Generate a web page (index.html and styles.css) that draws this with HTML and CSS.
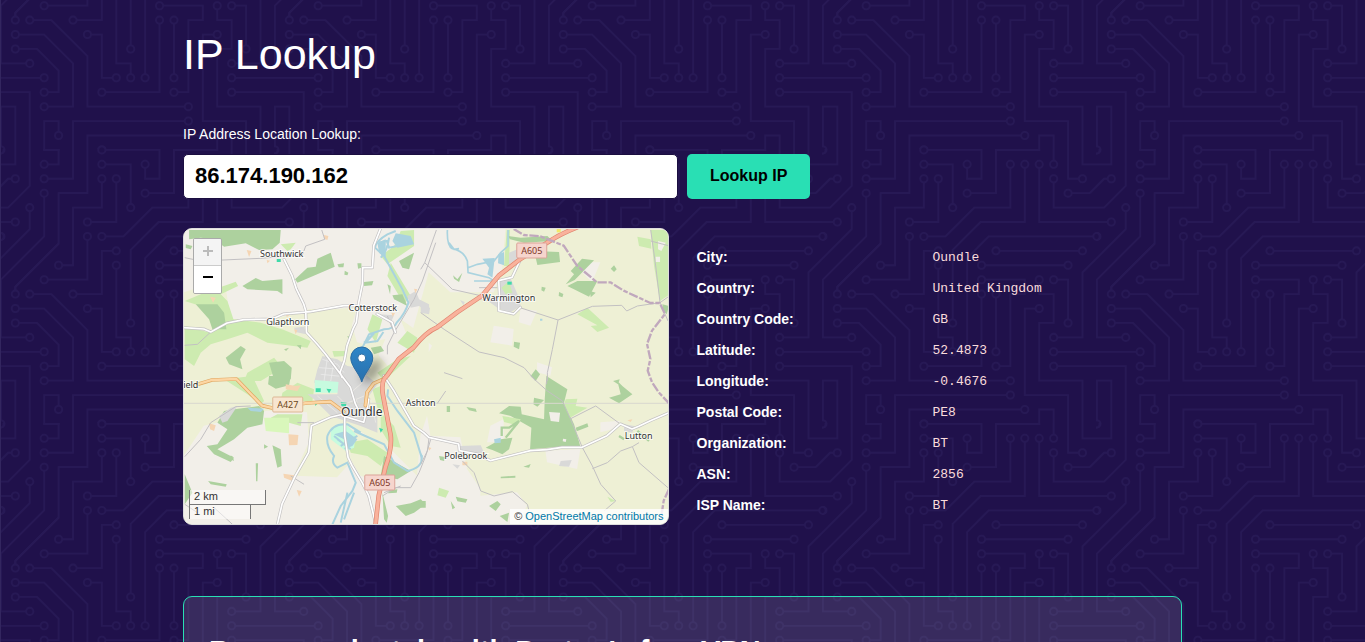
FILE: index.html
```html
<!DOCTYPE html>
<html lang="en">
<head>
<meta charset="utf-8">
<meta name="viewport" content="width=device-width, initial-scale=1">
<title>IP Lookup</title>
<link rel="stylesheet" href="styles.css">
</head>
<body>
<main class="page">
  <h1 class="title">IP Lookup</h1>
  <form class="lookup">
    <label class="lookup-label" for="ip">IP Address Location Lookup:</label>
    <div class="lookup-row">
      <input class="lookup-input" id="ip" name="ip" type="text" value="86.174.190.162">
      <button class="lookup-button" type="button">Lookup IP</button>
    </div>
  </form>

  <section class="result">
    <div class="map">
      <svg class="map-canvas" viewBox="0 0 484 295" preserveAspectRatio="xMidYMid slice" role="img" aria-label="Map of Oundle and surroundings">
        <defs>
          <linearGradient id="pin" x1="0" y1="0" x2="0" y2="1"><stop offset="0" stop-color="#2e86c8"/><stop offset="1" stop-color="#2a70ad"/></linearGradient>
          <filter id="soft" x="-50%" y="-50%" width="200%" height="200%"><feGaussianBlur stdDeviation="5"/></filter>
          <path id="lanes" d="M301 91L325 140L338 180L360 225L366 245L368 310L400 345L425 375L470 435L500 475L515 525L525 545M0 296L60 300L81 309L130 282L180 272L265 270L300 255L380 248L480 230L520 230M590 0L570 50L566 116H537L536 165L525 220L518 280L508 300L490 350L482 395L469 430L475 445M580 255L625 280L635 310M281 886L295 825L335 740L375 670L383 590L440 565L480 555M483 555V620L493 685L505 710L535 760L555 800L575 880M600 440L630 485L690 590L720 611L735 625L825 645L827 665L880 675L920 695L1040 665L1090 662L1135 655L1195 655L1270 620L1310 585L1345 600L1365 592L1400 575L1458 550M1011 90L985 145L945 155L948 210L910 212L885 206M945 210V245L990 255L1010 235M475 560L540 580L550 540L555 510"/>
          <path id="a427" d="M45 465L85 453L158 450L235 530L265 537L370 522L440 518L480 548M545 530L550 490L570 463L600 450"/>
          <path id="a605" d="M575 891L585 800L605 715Q625 660 621 620L598 500Q590 455 610 440L645 390Q670 370 690 355Q725 310 760 295L820 250L895 200L945 140L1010 90L1100 35Q1130 15 1180 -5"/>
        </defs>
        <rect width="484" height="295" fill="#eef0d5"/>
        <g transform="scale(.3333)">
          <!-- bare land -->
          <g fill="#f2efe9">
            <path d="M0 0H965L955 120L930 190L800 190L735 130L660 400L620 420L560 350L520 340L490 240L380 240L270 270L140 270L125 170L60 170L0 190Z"/>
            <path d="M0 680L60 590L190 560L250 545L370 550L375 640L330 740L460 745L500 700L500 590L620 660L700 740L710 620L730 560L740 620L830 625L850 720L890 780L890 800L1000 790L1030 830L1000 891H0Z"/>
            <path d="M1200 100L1250 100L1225 160L1195 130ZM930 290L990 300L985 350L920 340ZM1010 240L1060 245L1040 290L1005 280ZM1085 665L1190 660L1180 720L1090 700ZM1250 580L1310 575L1290 600L1250 610ZM920 590L960 570L960 640L910 640ZM1060 400L1105 415L1100 440L1060 430ZM711 320L745 350L735 370L711 360Z"/>
          </g>
          <path fill="#eef0d5" d="M400 245L520 235L490 340L430 370L375 300ZM560 340L605 330L570 410H500L530 360ZM650 270L735 330L735 400L690 370ZM500 600L600 640L640 730L600 760L530 740L500 690Z"/>
          <g transform="translate(-9 -9)">
            <g fill="#cdebb0">
              <path d="M12 225L60 205L165 167L172 180L120 205L140 225L158 280L240 290L310 312L390 345L380 365L260 350L200 320L140 340L90 355L60 380L40 420L12 400L12 300L80 318L110 305L60 240Z"/>
              <path d="M660 15L700 12L700 60L620 115L600 90L640 60ZM630 110L690 210L670 235L620 150ZM560 310L575 265L605 280L585 350ZM680 315L710 335L700 380L650 350ZM455 375H495V390L460 392ZM200 440L280 395L305 425L240 465H190ZM590 440L650 400L690 390L610 465Z"/>
              <path d="M300 55L345 50L330 70L320 75Z"/>
            </g>
            <g fill="#add19e">
              <path d="M25 12H300L297 50L275 70L235 72L195 52L130 62L100 40L60 35L25 40ZM185 180L225 156L245 165L305 160V205L290 195L200 190ZM343 160L380 125L405 122L410 98L450 80L462 122L420 140L350 170ZM45 235L110 235L130 260L137 310H95L85 280ZM135 395L180 360L195 370L178 400L185 430L145 415ZM265 410L310 405L333 425L330 460L280 462ZM550 168L578 165L574 178L550 180ZM635 208L665 205L680 240L640 220ZM470 115L490 112L488 124L474 124ZM530 112H542V125L532 128ZM492 134L503 140L500 148L491 146ZM655 105L700 80L685 130L665 125ZM620 175L630 180L628 205ZM348 358L362 357L360 370ZM310 370L325 365L316 375ZM500 330L510 332L505 345Z"/>
              <path d="M15 55L35 60L30 70L15 66ZM570 365L600 360L610 375L580 385Z"/>
            </g>
            <path fill="#d9d9d8" d="M425 390L470 400L500 420L570 430L545 470H400L410 430ZM680 210L705 195L715 220L745 235V262L715 240L690 245ZM340 305L370 302L375 325L345 318ZM595 265L640 268L630 290Z"/>
            <path fill="none" stroke="#efefef" stroke-width="2" d="M425 400L470 415L490 440M415 425L480 430M420 445L520 455M440 395L430 465M460 405L450 465"/>
            <path fill="#f5d5b3" d="M430 27L443 30L440 42L430 38ZM198 72L212 75L205 93ZM88 212L105 215L97 230ZM340 310L350 312L345 325ZM315 264L328 266L318 273ZM258 102L268 104L260 112ZM632 260L643 262L636 272ZM700 188L710 190L704 202Z"/>
            <path fill="#3fdaa9" d="M288 99H300V108H288Z"/>
            <path fill="#aad3df" d="M645 22L690 30L700 55L650 65L635 45ZM590 50L615 40L615 95L595 80Z"/>
            <path fill="none" stroke="#aad3df" stroke-width="6" d="M645 15L620 25Q585 45 583 65L610 90L640 145L665 190L683 230Q675 260 648 290Q640 310 610 310L565 325L545 365M600 95Q620 75 625 35M595 50L618 45L625 65L650 60M608 318L590 345L555 350L580 322L550 350"/>
          </g>
          <g transform="translate(711 -9)">
            <path fill="#cdebb0" d="M690 12H738L747 40V205L718 225L700 120ZM650 32L690 40L692 68L655 60ZM470 265L500 245L565 305L530 318L510 300L530 298ZM258 12H268L265 120L250 120Z"/>
            <path fill="#add19e" d="M262 30L300 35L380 30L395 45L310 50L268 40ZM340 75L415 78L418 108L350 117ZM484 98L520 103L462 162L435 175L460 145L450 135ZM470 165L530 165L505 212L440 180ZM570 128L580 118L588 130L580 138ZM725 235L745 240L738 265L728 255ZM280 347L298 350L295 370L279 362ZM330 450L345 430L358 445L345 465ZM363 182L375 185L370 197L362 193ZM415 198L428 204L425 214L414 210ZM97 148L110 160L125 140L115 168L100 158ZM508 195L525 200L510 214Z"/>
            <path fill="#f2efe9" d="M705 92H718V108H705ZM712 45L735 50L722 75L712 70Z"/>
            <path fill="#d9d9d8" d="M238 160L270 158L295 215L300 240L265 262L230 245L188 215L230 212ZM265 80L290 70V100L265 115ZM118 222L132 228L128 238ZM0 240L28 245L25 265L0 260Z"/>
            <path fill="#cdebb0" d="M242 185L265 165L275 200L255 205Z"/>
            <path fill="#3fdaa9" d="M260 167H273V176H260Z"/>
            <path fill="#aad3df" d="M233 85L250 78L250 118L232 112ZM185 98L222 96L215 155L200 145L205 125ZM358 278H365V284H358Z"/>
            <path fill="none" stroke="#aad3df" stroke-width="5" d="M80 12Q78 60 95 68Q130 75 140 105L142 140L205 155L220 165L160 165M85 50L100 70L115 68M142 125L170 115L220 105L240 80L262 60V12"/>
          </g>
          <g transform="translate(-9 441)">
            <path fill="#cdebb0" d="M130 10L215 0L250 75L240 85L200 55ZM290 115H365L360 150L270 125ZM305 50L350 20L400 40L395 75L300 75ZM500 200L560 190L620 230L600 270L560 240L510 230ZM575 40L600 30L610 110L590 95ZM600 110L640 150L660 215L630 210L600 160Z"/>
            <path fill="#d9f7bb" d="M250 125H325V172L255 165Z"/>
            <path fill="#add19e" d="M130 105L160 100L235 90L250 105L245 145L200 155L160 190L110 220L160 245L150 258L100 235L78 210L110 205L140 160L110 140ZM265 0L330 0L325 28L285 38L262 25ZM275 208L300 220L303 270L290 275L282 240ZM12 295L35 350L12 385ZM610 240L690 285L650 310L600 300ZM250 205L262 212L250 218ZM225 262H232L230 316H226ZM82 315L138 325L135 332L90 325ZM625 342L650 340L648 350L622 352ZM645 390L690 382L720 370L735 385L700 410L675 420ZM155 240L160 255L120 235ZM605 350L622 420L618 440L610 430Z"/>
            <path fill="#c6fbdf" d="M402 12L475 18V50L402 50ZM450 155L495 145L525 175L520 215L495 225L450 190Z"/>
            <path fill="#d9d9d8" d="M475 0H560L590 25L550 80L590 110V170L540 150L450 120L400 70L380 55L470 55ZM115 120L150 95L170 90L140 135L125 140Z"/>
            <path fill="none" stroke="#f2efe9" stroke-width="2" d="M470 60L520 110M490 10L530 80M480 90L550 60M515 130L570 90M545 20L510 50M410 60L470 110M570 70L585 140"/>
            <path fill="#3fdaa9" d="M405 37H420V48H405ZM437 38L452 40L445 52ZM480 78L498 80L495 92L482 90ZM595 155L607 160L600 170ZM402 75L412 80L404 90Z"/>
            <path fill="#f5d5b3" d="M323 175L353 177L350 207L325 208ZM85 142L105 148L100 165L88 160ZM315 25L345 30L360 28L350 45L315 40ZM308 293L340 298L335 315L310 305ZM348 342L363 345L355 362Z"/>
            <path fill="#aad3df" d="M460 175L495 165L530 190L515 210L490 220L500 195ZM200 95L250 98L240 108L210 105Z"/>
            <path fill="none" stroke="#aad3df" stroke-width="6" d="M540 170L500 145Q455 140 440 180Q435 210 460 240Q450 262 470 275L500 260L525 320L515 345L480 390L455 445M520 165L610 205L640 260L680 285Q725 275 723 245L700 170L650 105L620 60L622 40M500 350L480 440M520 350L490 430M480 210L530 180M470 190L510 220M460 180L490 205"/>
          </g>
          <g transform="translate(711 441)">
            <path fill="#add19e" d="M377 0L440 40L430 80L460 145L480 215L420 212L328 220L332 155L270 120L235 112L265 90L300 92L303 115L370 130L372 70ZM340 65L370 72L350 92L338 85ZM590 15L605 30L635 55L595 82L565 65L600 55ZM195 215L240 190L275 185L265 220L245 235L215 222ZM465 155L500 142L503 152L468 166ZM137 93L165 98L168 108L145 103ZM78 90H88V108H78ZM240 302L284 299V305L240 307ZM308 272L330 264L325 275ZM105 362L140 370L135 380L110 376ZM205 390L230 375L240 385L225 405ZM237 420L265 410L260 438ZM0 375H15V395H0ZM90 375L103 395L95 400ZM577 15L597 10L592 25ZM55 240L73 243L70 255L58 252Z"/>
            <path fill="#cdebb0" d="M435 70L470 68L465 90L500 95L448 125L430 85ZM245 120L300 130L290 148L250 138ZM560 362L585 375L570 378ZM55 335L85 345L75 365L50 358Z"/>
            <path fill="#f2efe9" d="M385 108L418 110L415 138L390 135ZM427 188L437 190L435 198L426 196Z"/>
            <path fill="#d9d9d8" d="M115 210L180 208L190 230L120 235ZM420 255L453 252L445 272L415 270ZM95 265L118 268L110 278ZM610 145L640 150L635 170L610 165Z"/>
            <path fill="#aad3df" d="M220 190L240 185V200L222 202ZM0 230L7 240L0 255Z"/>
            <path fill="none" stroke="#add19e" stroke-width="7" d="M243 180V155H265L295 135L255 185M595 180L610 190M650 165L685 195"/>
            <path fill="#f5d5b3" d="M125 257H140V268H125ZM620 133L635 130L630 138ZM22 213L32 216L25 224Z"/>
          </g>

          <!-- tracks and minor roads -->
          <path fill="none" stroke="#d8d8d0" stroke-width="3" d="M0 523H1458"/>
          <g fill="none" stroke="#c2c0c2" stroke-width="3" stroke-linejoin="round">
            <path transform="translate(-9 -9)" d="M12 95L60 105L240 97L365 87L375 60L432 40L423 12M12 358L50 355L90 318M725 165L700 220L685 245L640 320L620 360V385M765 50L725 165M640 320L620 270"/>
            <path transform="translate(711 -9)" d="M47 12L12 110L0 130M12 110L95 190L175 208M175 185L230 185M0 260L70 310L175 378L250 395L310 425L345 465M298 245L412 282L515 241L603 238L618 255L650 240L718 230M412 282L395 370L380 440V465M690 12L705 120L718 230L742 285M718 230L746 210M690 45L747 60M70 440L125 458"/>
            <path transform="translate(-9 441)" d="M12 242L60 190L90 140L165 92L210 90M350 140H400M330 300L370 325M750 190L735 240L715 290L690 335H645L605 360M100 395L155 445M660 330L610 350M12 385L50 410"/>
            <path transform="translate(711 441)" d="M25 185L20 225L0 265M330 0L380 45L425 75L450 130L485 215L515 270L540 325L585 375L550 405M450 128L525 90L600 145M515 278L560 260L600 225L635 212L655 260L745 338M635 212L655 200M125 255L160 290L180 345L220 360L275 347L320 385L325 405M50 82L75 45M380 0L377 25"/>
          </g>
          <g fill="none" stroke-linejoin="round" stroke-linecap="round">
            <use href="#lanes" stroke="#c4c2c2" stroke-width="9"/>
            <use href="#lanes" stroke="#fff" stroke-width="5"/>
            <use href="#a427" stroke="#e0a660" stroke-width="11"/>
            <use href="#a427" stroke="#fcd6a4" stroke-width="7"/>
            <use href="#a605" stroke="#e0846e" stroke-width="14"/>
            <use href="#a605" stroke="#f9b29c" stroke-width="10"/>
            <path stroke="#c0a8bd" stroke-width="7" stroke-linecap="butt" stroke-dasharray="28 5 14 5" d="M990 0L1020 18L1070 22L1140 50L1180 110L1240 160L1280 160L1320 185L1400 222L1428 222L1444 255L1405 305L1390 345L1400 390L1392 425L1405 460L1425 490L1458 525M1456 780L1440 815L1430 880"/>
          </g>
          <rect x="1119" width="12" height="10" fill="#f3e96a"/>
        </g>

        <g class="shield shield-primary"><rect x="333" y="14" width="30" height="15" rx="1"/><text x="348" y="25">A605</text></g>
        <g class="shield shield-primary"><rect x="181" y="246" width="30" height="15" rx="1"/><text x="196" y="257">A605</text></g>
        <g class="shield shield-secondary"><rect x="89" y="168" width="30" height="15" rx="1"/><text x="104" y="179">A427</text></g>
        <g class="place">
          <text x="98" y="28">Southwick</text>
          <text x="104" y="96">Glapthorn</text>
          <text x="189" y="82">Cotterstock</text>
          <text x="325" y="72">Warmington</text>
          <text x="7" y="159">ield</text>
          <text x="237" y="177">Ashton</text>
          <text x="282" y="230">Polebrook</text>
          <text x="455" y="210">Lutton</text>
          <text class="place-town" x="178" y="187">Oundle</text>
        </g>
        <ellipse cx="188" cy="142" rx="7" ry="14" fill="#000" opacity=".35" filter="url(#soft)" transform="rotate(35 188 142)"/>
        <path fill="url(#pin)" stroke="#2b6ca3" d="M178 153C176 145 167 137 167 129A11 11 0 0 1 189 129C189 137 180 145 178 153Z"/>
        <circle cx="178" cy="129" r="4" fill="#fff" stroke="#2b6ca3"/>
      </svg>
      <div class="zoom">
        <button class="zoom-button" type="button" aria-label="Zoom in" disabled><svg viewBox="0 0 13 13" width="13" height="13"><path d="M7 0V10M2 5H12"/></svg></button>
        <button class="zoom-button" type="button" aria-label="Zoom out"><svg viewBox="0 0 13 13" width="13" height="13"><path d="M2 4H12"/></svg></button>
      </div>
      <div class="scale">
        <div class="scale-line scale-km">2 km</div>
        <div class="scale-line scale-mi">1 mi</div>
      </div>
      <div class="credit">© <a href="#osm">OpenStreetMap contributors</a></div>
    </div>

    <table class="details">
      <tbody>
        <tr><th scope="row">City:</th><td>Oundle</td></tr>
        <tr><th scope="row">Country:</th><td>United Kingdom</td></tr>
        <tr><th scope="row">Country Code:</th><td>GB</td></tr>
        <tr><th scope="row">Latitude:</th><td>52.4873</td></tr>
        <tr><th scope="row">Longitude:</th><td>-0.4676</td></tr>
        <tr><th scope="row">Postal Code:</th><td>PE8</td></tr>
        <tr><th scope="row">Organization:</th><td>BT</td></tr>
        <tr><th scope="row">ASN:</th><td>2856</td></tr>
        <tr><th scope="row">ISP Name:</th><td>BT</td></tr>
      </tbody>
    </table>
  </section>

  <section class="promo">
    <h2 class="promo-title">Browse privately with Proton's free VPN</h2>
  </section>
</main>
</body>
</html>
```
FILE: styles.css
```css
* { box-sizing: border-box; }

body {
  margin: 0;
  color: #fff;
  font-family: "Liberation Sans", Arial, sans-serif;
  font-size: 14px;
  background-color: #20114b;
  background-position: 0 -125px;
  background-size: 274px 274px;
  background-image: url("data:image/svg+xml,%3Csvg xmlns='http://www.w3.org/2000/svg' viewBox='0 0 304 304'%3E%3Cdefs%3E%3Cmarker id='n' markerUnits='userSpaceOnUse' markerWidth='12' markerHeight='12' refX='6' refY='6'%3E%3Ccircle cx='6' cy='6' r='4' fill='%2320114b' stroke='%23271955' stroke-width='2'/%3E%3C/marker%3E%3C/defs%3E%3Cg fill='none' stroke='%23271955' stroke-width='2'%3E%3Cg%3E%3Cpath d='M0 1V0M65 0V1H49V0M193 0V1H242M97 0V49H65V105L17 153V161M33 0V41L9 65H0M33 304V241H0M0 17H17V0M289 0V17H304M257 304V289H241V304'/%3E%3C/g%3E%3Cg marker-end='url(%23n)'%3E%3Cpath d='M0 225H49'/%3E%3Cpath d='M81 304V273H209'/%3E%3Cpath d='M304 225H257'/%3E%3Cpath d='M304 241H257'/%3E%3Cpath d='M0 81H17'/%3E%3Cpath d='M257 0V17'/%3E%3Cpath d='M304 81H241V17'/%3E%3Cpath d='M304 65H257V33'/%3E%3Cpath d='M49 304V273H65V289'/%3E%3Cpath d='M273 304V273H225V177H241'/%3E%3Cpath d='M273 0V33H289'/%3E%3Cpath d='M81 0V33H49'/%3E%3Cpath d='M97 304V289H225'/%3E%3Cpath d='M289 304V257H241V193H257V161H241V145'/%3E%3Cpath d='M49 0V1H65V17H49'/%3E%3Cpath d='M242 1H193V49H161'/%3E%3Cpath d='M65 49H97M65 105L17 153V161'/%3E%3Cpath d='M-1 123L33 89V65'/%3E%3Cpath d='M-1 43L9 33H17'/%3E%3Cpath d='M305 41L297 49H273'/%3E%3Cpath d='M305 121L289 137V209H257'/%3E%3Cpath d='M17 304V257H1V305'/%3E%3C/g%3E%3Cg marker-start='url(%23n)' marker-end='url(%23n)'%3E%3Cpath d='M273 129H177'/%3E%3Cpath d='M193 113H289'/%3E%3Cpath d='M193 225V161'/%3E%3Cpath d='M129 129V209H145V225'/%3E%3Cpath d='M129 113H113V161H81'/%3E%3Cpath d='M113 241H177V161'/%3E%3Cpath d='M97 177H113V225H129'/%3E%3Cpath d='M257 145H273V193'/%3E%3Cpath d='M193 241H209V161H225V145H177'/%3E%3Cpath d='M97 97V145H49'/%3E%3Cpath d='M113 33V65H81V129H65'/%3E%3Cpath d='M97 81H129V33'/%3E%3Cpath d='M113 17H145V65'/%3E%3Cpath d='M113 1H177V33H161V17'/%3E%3Cpath d='M113 97H137L169 65H209V17'/%3E%3Cpath d='M145 193V112L176 81H225V17'/%3E%3Cpath d='M161 225V121L185 97H305'/%3E%3Cpath d='M49 49V97L1 145V209H33'/%3E%3Cpath d='M49 241H65V217L41 193H17'/%3E%3Cpath d='M209 257H97V201L57 161H33'/%3E%3Cpath d='M49 257H81V209L49 177H17'/%3E%3Cpath d='M1 97H0'/%3E%3Cpath d='M1 1H0'/%3E%3Cpath d='M113 305H113'/%3E%3C/g%3E%3C/g%3E%3C/svg%3E");
  box-shadow: inset 1px 0 #33265f;
}

.page {
  max-width: 1031px;
  margin: 0 auto;
  padding: 30px 16px 0;
}

.title {
  margin: 0;
  font-size: 43px;
  font-weight: 400;
  line-height: 48px;
}

.lookup { margin-top: 46px; }

.lookup-label {
  display: block;
  line-height: 20px;
}

.lookup-row {
  display: flex;
  align-items: center;
  gap: 9px;
  margin-top: 10px;
}

.lookup-input {
  flex: 0 1 495px;
  min-width: 0;
  height: 45px;
  padding: 0 11px 2px;
  border: 1px solid #1b0e40;
  border-radius: 5px;
  background: #fff;
  color: #000;
  font: bold 22px "Liberation Sans", Arial, sans-serif;
}

.lookup-button {
  height: 45px;
  padding: 0 23px 2px;
  border: 0;
  border-radius: 5px;
  background: #29dfb4;
  color: #000;
  font: bold 16px "Liberation Sans", Arial, sans-serif;
  white-space: nowrap;
}

.result {
  display: grid;
  grid-template-columns: minmax(0, 1fr) minmax(0, 1fr);
  gap: 28px;
  align-items: start;
  margin-top: 29px;
}

.map {
  position: relative;
  overflow: hidden;
  height: 297px;
  border: 1px solid #ddd;
  border-radius: 9px;
  background: #eef0d5;
}

.map-canvas {
  display: block;
  width: 100%;
  height: 100%;
}

.place text {
  fill: #333;
  stroke: #fff;
  stroke-opacity: .7;
  stroke-width: 2px;
  paint-order: stroke;
  font: 9px "Noto Sans", sans-serif;
  text-anchor: middle;
}

.place .place-town { font-size: 12px; }

.shield text {
  font: 9px "Noto Sans", sans-serif;
  text-anchor: middle;
}

.shield-primary rect { fill: #f6d5cd; stroke: #dba398; }
.shield-primary text { fill: #7c3528; }
.shield-secondary rect { fill: #f8e5d0; stroke: #dcb894; }
.shield-secondary text { fill: #6b4620; }

.zoom {
  position: absolute;
  top: 9px;
  left: 9px;
  width: 29px;
  border: 1px solid #aaa;
  border-radius: 2px;
  overflow: hidden;
}

.zoom-button {
  display: flex;
  align-items: center;
  justify-content: center;
  width: 100%;
  height: 27px;
  padding: 0;
  border: 0;
  background: #fff;
}

.zoom-button path {
  stroke: #000;
  stroke-width: 2;
}

.zoom-button:disabled {
  background: #f4f4f4;
  border-bottom: 1px solid #ccc;
}

.zoom-button:disabled path { stroke: #bbb; }

.scale {
  position: absolute;
  bottom: 5px;
  left: 5px;
  color: #333;
  font-size: 11px;
  line-height: 13px;
}

.scale-line {
  height: 15px;
  padding-left: 4px;
  border: 1px solid #777;
  border-top: 0;
  background: rgba(255, 255, 255, .5);
}

.scale-km { width: 77px; }

.scale-mi {
  width: 62px;
  border-top: 1px solid #777;
  border-bottom: 0;
  margin-top: -1px;
}

.credit {
  position: absolute;
  right: 0;
  bottom: 0;
  padding: 0 4px;
  background: rgba(255, 255, 255, .8);
  color: #333;
  font-size: 11px;
  line-height: 15px;
}

.credit a {
  color: #0078a8;
  text-decoration: none;
}

.details {
  width: 100%;
  margin-top: 14px;
  border-collapse: collapse;
  table-layout: fixed;
  line-height: 17px;
}

.details th,
.details td {
  padding: 7px 0;
  text-align: left;
}

.details th { width: 236px; }

.details td {
  color: #fadcdc;
  font: 13px/17px "Liberation Mono", monospace;
}

.promo {
  margin-top: 71px;
  padding: 34px 25px;
  border: 1px solid #29dfb4;
  border-radius: 9px;
  background: rgba(255, 255, 255, .11);
}

.promo-title {
  margin: 0;
  font-size: 29px;
  line-height: 40px;
}
```
